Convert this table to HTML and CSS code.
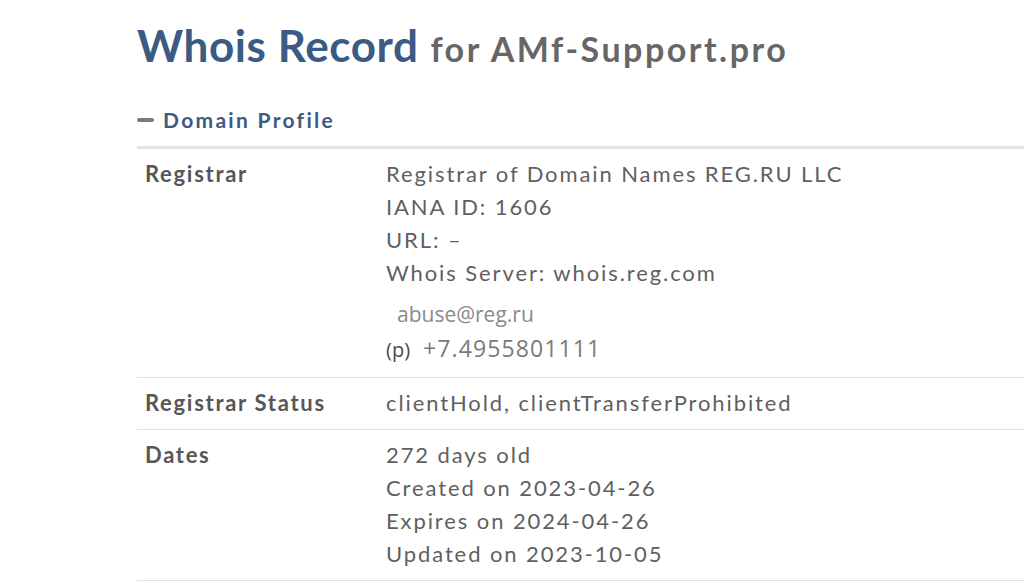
FILE: index.html
```html
<!DOCTYPE html>
<html lang="en">
<head>
<meta charset="utf-8">
<title>Whois Record for AMf-Support.pro</title>
<link rel="stylesheet" href="styles.css">
</head>
<body>
<main class="page">
  <h1 class="title"><span class="title-main">Whois Record</span> <span class="title-sub">for AMf-Support.pro</span></h1>
  <h2 class="section-head"><span class="minus"></span>Domain Profile</h2>
  <div class="table">
    <div class="row">
      <div class="label">Registrar</div>
      <div class="value">
        <div>Registrar of Domain Names REG.RU LLC</div>
        <div>IANA ID: 1606</div>
        <div>URL: –</div>
        <div>Whois Server: whois.reg.com</div>
        <div class="contact">
          <div class="email">abuse@reg.ru</div>
          <div class="phone"><span class="p">(p)</span><span class="num">+7.4955801111</span></div>
        </div>
      </div>
    </div>
    <div class="row">
      <div class="label">Registrar Status</div>
      <div class="value"><div>clientHold, clientTransferProhibited</div></div>
    </div>
    <div class="row">
      <div class="label">Dates</div>
      <div class="value">
        <div>272 days old</div>
        <div>Created on 2023-04-26</div>
        <div>Expires on 2024-04-26</div>
        <div>Updated on 2023-10-05</div>
      </div>
    </div>
  </div>
</main>
</body>
</html>
```
FILE: styles.css
```css
html, body {
  margin: 0;
  padding: 0;
  background: #fff;
}
body {
  font-family: Lato, "Liberation Sans", sans-serif;
  color: #5f5f5f;
  overflow: hidden;
}
.page {
  padding: 13px 0 0 137px;
}
.title {
  margin: 0;
  font-weight: 700;
  line-height: 64px;
  white-space: nowrap;
}
.title-main {
  font-size: 44px;
  color: #3b5a84;
  letter-spacing: 0.6px;
}
.title-sub {
  font-size: 34px;
  color: #666;
  margin-left: 4px;
  letter-spacing: 2.5px;
}
.section-head {
  margin: 23px 0 0 0;
  font-size: 21px;
  font-weight: 700;
  color: #3e5a80;
  line-height: 30px;
  display: flex;
  align-items: center;
  letter-spacing: 2.3px;
}
.minus {
  display: inline-block;
  width: 17px;
  height: 4px;
  border-radius: 2px;
  background: #7a7a7a;
  margin-right: 9px;
}
.table {
  margin-top: 11px;
  border-top: 3px solid #e2e2e2;
}
.row {
  display: flex;
  padding: 8px 0 10px 0;
  border-bottom: 1px solid #e0e0e0;
  font-size: 22px;
  line-height: 33px;
}
.label {
  width: 241px;
  padding-left: 8px;
  flex: none;
  font-weight: 700;
  color: #575757;
  letter-spacing: 1.7px;
}
.value {
  color: #5f5f5f;
  letter-spacing: 1.9px;
}
.contact {
  padding-top: 8px;
  font-family: "Open Sans", "Noto Sans", sans-serif;
  letter-spacing: 0;
}
.email {
  font-size: 21px;
  line-height: 34px;
  color: #8a8a8a;
  padding-left: 11px;
}
.phone {
  line-height: 34px;
  display: flex;
  align-items: baseline;
}
.p {
  font-size: 20px;
  color: #4a4a4a;
}
.num {
  font-size: 23px;
  color: #7a7a7a;
  margin-left: 13px;
  letter-spacing: 1.1px;
}
```
